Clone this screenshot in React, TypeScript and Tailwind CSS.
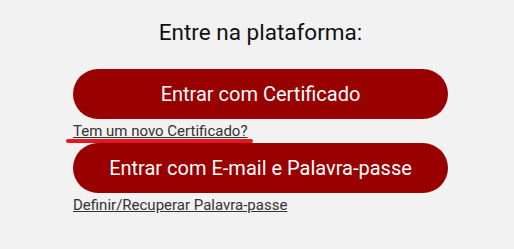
import React from "react";

export default function App() {
  return (
    <div className="min-h-[249px] w-full bg-[#f2f2f2] font-['Roboto',sans-serif] flex justify-center pl-[7px]">
      <div className="w-[375px] flex flex-col pt-[19px]">
        <h1 className="text-center text-[22.5px] leading-[26px] text-[#111]">Entre na plataforma:</h1>
        <button className="mt-[24px] h-[50px] w-full rounded-full bg-[#990000] text-white text-[20px] leading-[24px]">
          Entrar com Certificado
        </button>
        <div className="relative h-[24px]">
          <a href="#" className="text-[15px] leading-[18px] text-[#333] underline block pt-[3px]">
            Tem um novo Certificado?
          </a>
          <div className="absolute left-[-7px] top-[20px] h-[4px] w-[187px] rounded-full bg-[#e5161e]" />
        </div>
        <button className="h-[50px] w-full rounded-full bg-[#990000] text-white text-[20px] leading-[24px]">
          Entrar com E-mail e Palavra-passe
        </button>
        <a href="#" className="mt-[3px] text-[15px] leading-[18px] text-[#333] underline">
          Definir/Recuperar Palavra-passe
        </a>
      </div>
    </div>
  );
}
